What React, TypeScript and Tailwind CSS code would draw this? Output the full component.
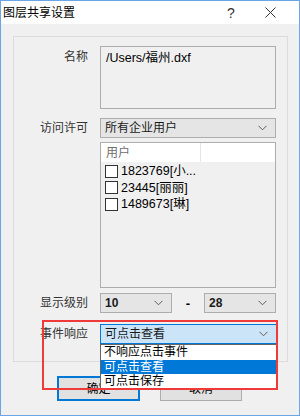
const FONT = "font-['Segoe_UI','Liberation_Sans','Noto_Sans_CJK_SC',sans-serif]";

function Chevron() {
  return (
    <svg width="9" height="6" viewBox="0 0 9 6" className="shrink-0">
      <path d="M0.5 0.8 L4.5 4.8 L8.5 0.8" fill="none" stroke="#606060" strokeWidth="1" />
    </svg>
  );
}

function Combo({ value, className = "" }: { value: string; className?: string }) {
  return (
    <div
      className={`flex h-[20px] items-center justify-between border border-[#adadad] bg-[#e5e5e5] pl-[4px] pr-[8px] text-[12px] text-[#1a1a1a] ${className}`}
    >
      <span className="leading-none">{value}</span>
      <Chevron />
    </div>
  );
}

function Checkbox() {
  return <div className="h-[13px] w-[13px] shrink-0 border border-[#333] bg-white" />;
}

const users = ["1823769[小...", "23445[丽丽]", "1489673[琳]"];
const options = ["不响应点击事件", "可点击查看", "可点击保存"];

export default function App() {
  return (
    <div className={`relative flex h-[416px] w-[300px] flex-col border border-[#6aa6e6] bg-[#f0f0f0] ${FONT}`}>
      {/* title bar */}
      <div className="flex h-[23px] shrink-0 items-center bg-white pl-[2px] text-[12px] text-black">
        <span className="flex-1 leading-none">图层共享设置</span>
        <span className="w-[20px] text-center text-[14px] leading-none text-[#333]">?</span>
        <div className="flex w-[58px] items-center justify-center">
          <svg width="11" height="11" viewBox="0 0 11 11">
            <path d="M0.5 0.5 L10.5 10.5 M10.5 0.5 L0.5 10.5" stroke="#333" strokeWidth="1" />
          </svg>
        </div>
      </div>

      {/* body */}
      <div className="flex flex-1 flex-col pl-[12px] pt-[12px]">
        <div className="flex h-[326px] w-[275px] flex-col border border-[#dcdcdc] pt-[9px]">
          {/* name */}
          <div className="flex">
            <div className="w-[76px] pr-[2px] pt-[4px] text-right text-[12px] leading-[15px] text-[#333]">名称</div>
            <div className="ml-[10px] h-[63px] w-[176px] border border-[#adadad] bg-[#f0f0f0] px-[5px] pt-[4px] text-[12.5px] leading-[15px] text-black">
              /Users/福州.dxf
            </div>
          </div>

          {/* access */}
          <div className="mt-[9px] flex items-center">
            <div className="w-[76px] pr-[2px] text-right text-[12px] leading-none text-[#333]">访问许可</div>
            <Combo value="所有企业用户" className="ml-[10px] w-[176px]" />
          </div>

          {/* user list */}
          <div className="mt-[4px] flex">
            <div className="w-[86px]" />
            <div className="flex h-[146px] w-[176px] flex-col border border-[#adadad] bg-[#f0f0f0]">
              <div className="flex h-[19px] shrink-0 bg-white">
                <div className="flex w-[100px] items-center border-r border-[#e5e5e5] pl-[5px] text-[12px] text-[#6d6d6d]">用户</div>
                <div className="flex-1" />
              </div>
              <div className="flex flex-col pt-[1px]">
                {users.map((u) => (
                  <div key={u} className="flex h-[16.5px] items-center gap-[3px] pl-[4px] text-[12.5px] leading-none text-black">
                    <Checkbox />
                    <span>{u}</span>
                  </div>
                ))}
              </div>
            </div>
          </div>

          {/* levels */}
          <div className="mt-[5px] flex items-center">
            <div className="w-[76px] pr-[2px] text-right text-[12px] leading-none text-[#333]">显示级别</div>
            <Combo value="10" className="ml-[10px] w-[72px] font-semibold" />
            <div className="w-[32px] text-center text-[13px] font-semibold leading-none text-black">-</div>
            <Combo value="28" className="w-[72px] font-semibold" />
          </div>

          {/* event */}
          <div className="mt-[11px] flex items-center">
            <div className="w-[76px] pr-[2px] text-right text-[12px] leading-none text-[#333]">事件响应</div>
            <div className="relative ml-[10px] w-[177px]">
              <div className="flex h-[20px] items-center justify-between border border-[#0078d7] bg-[#cce4f7] pl-[4px] pr-[8px] text-[12px] text-[#1a1a1a]">
                <span className="leading-none">可点击查看</span>
                <Chevron />
              </div>
              <div className="absolute left-0 top-[20px] z-10 w-[177px] border border-[#646464] bg-white text-[12px]">
                {options.map((o, i) => (
                  <div
                    key={o}
                    className={`flex h-[14.5px] items-center pl-[3px] leading-none ${
                      i === 1 ? "bg-[#0078d7] text-white" : "text-black"
                    }`}
                  >
                    {o}
                  </div>
                ))}
              </div>
            </div>
          </div>
        </div>

        {/* buttons */}
        <div className="mt-[14px] flex gap-[20px] pl-[44px]">
          <button className="h-[25px] w-[83px] border-2 border-[#0078d7] bg-[#e1e1e1] text-[12px] text-black">确定</button>
          <button className="h-[25px] w-[82px] border border-[#adadad] bg-[#e1e1e1] text-[12px] text-black">取消</button>
        </div>
      </div>

      {/* red annotation */}
      <div className="pointer-events-none absolute left-[41px] top-[319px] z-20 h-[70px] w-[236px] border-2 border-[#f03a3a]" />
    </div>
  );
}
